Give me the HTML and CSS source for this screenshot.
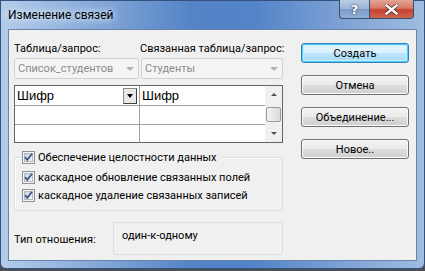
FILE: index.html
```html
<!DOCTYPE html>
<html lang="ru">
<head>
  <meta charset="UTF-8" />
  <title>Изменение связей</title>
  <link rel="stylesheet" href="styles.css">
</head>
<body>
  <div class="window">
    <div class="titlebar">
      <span class="title">Изменение связей</span>
      <div class="caption-buttons">
        <span class="cap-btn help">?</span>
        <span class="cap-btn close">
          <svg width="13" height="11" viewBox="0 0 13 11">
            <path d="M1.5 1.5 L11.5 9.5 M11.5 1.5 L1.5 9.5" stroke="#5a2a24" stroke-width="4" stroke-linecap="square" fill="none"/>
            <path d="M1.5 1.5 L11.5 9.5 M11.5 1.5 L1.5 9.5" stroke="#ffffff" stroke-width="2.4" stroke-linecap="square" fill="none"/>
          </svg>
        </span>
      </div>
    </div>

    <div class="client">
      <div class="main">
        <div class="pick-row">
          <div class="pick pick-left">
            <label>Таблица/запрос:</label>
            <div class="combo"><span>Список_студентов</span><i class="combo-arrow"></i></div>
          </div>
          <div class="pick pick-right">
            <label>Связанная таблица/запрос:</label>
            <div class="combo"><span>Студенты</span><i class="combo-arrow"></i></div>
          </div>
        </div>

        <div class="grid">
          <div class="cols">
            <div class="row row-1">
              <div class="cell cell-left">Шифр<span class="cell-drop"><i></i></span></div>
              <div class="cell">Шифр</div>
            </div>
            <div class="row row-2">
              <div class="cell cell-left"></div>
              <div class="cell"></div>
            </div>
            <div class="row row-3">
              <div class="cell cell-left"></div>
              <div class="cell"></div>
            </div>
          </div>
          <div class="scrollbar">
            <span class="sb-btn"><i class="up"></i></span>
            <span class="sb-track"><span class="sb-thumb"></span></span>
            <span class="sb-btn"><i class="down"></i></span>
          </div>
        </div>

        <div class="group">
          <div class="check legend">
            <svg class="box" width="13" height="13" viewBox="0 0 13 13"><use href="#cb"/></svg>
            <span>Обеспечение целостности данных</span>
          </div>
          <div class="check">
            <svg class="box" width="13" height="13" viewBox="0 0 13 13"><use href="#cb"/></svg>
            <span>каскадное обновление связанных полей</span>
          </div>
          <div class="check">
            <svg class="box" width="13" height="13" viewBox="0 0 13 13"><use href="#cb"/></svg>
            <span>каскадное удаление связанных записей</span>
          </div>
        </div>

        <div class="relation">
          <span class="relation-label">Тип отношения:</span>
          <div class="relation-box">один-к-одному</div>
        </div>
      </div>

      <div class="side">
        <button class="btn default">Создать</button>
        <button class="btn">Отмена</button>
        <button class="btn">Объединение...</button>
        <button class="btn">Новое..</button>
      </div>
    </div>
  </div>

  <svg width="0" height="0" style="position:absolute">
    <defs>
      <linearGradient id="cbfill" x1="0" y1="0" x2="1" y2="1">
        <stop offset="0" stop-color="#cbd2da"/>
        <stop offset="1" stop-color="#f7f7f7"/>
      </linearGradient>
      <symbol id="cb" viewBox="0 0 13 13">
        <rect x="0.5" y="0.5" width="12" height="12" fill="#f4f4f4" stroke="#8e8f8f"/>
        <rect x="2.5" y="2.5" width="8" height="8" fill="url(#cbfill)" stroke="#b3b9c1"/>
        <path d="M3 6.2 L5.3 8.8 L10 2.8" stroke="#3d5591" stroke-width="1.8" fill="none"/>
      </symbol>
    </defs>
  </svg>
</body>
</html>
```

FILE: styles.css
```css
body {
  margin: 0;
  background-color: #4b4f55;
  font-family: Roboto, "Liberation Sans", sans-serif;
  font-size: 11px;
  color: #000;
}

.window {
  width: 425px;
  height: 269px;
  box-sizing: border-box;
  border: 1px solid #34527d;
  border-radius: 0 0 6px 6px;
  background: linear-gradient(to right, #b3cceb 0%, #8fb0dc 18%, #5483c6 45%, #5384c8 60%, #86a8d7 85%, #9fbde2 100%);
  display: flex;
  flex-direction: column;
}

.titlebar {
  height: 28px;
  display: flex;
  align-items: flex-start;
  padding-left: 7px;
}

.title {
  margin-top: 6px;
  font-size: 12px;
  line-height: 16px;
  text-shadow: 0 0 6px #e6f0fb, 0 0 10px #d8e6f7;
}

.caption-buttons {
  margin-left: auto;
  margin-right: 10px;
  margin-top: -1px;
  display: flex;
}

.cap-btn {
  height: 19px;
  display: flex;
  align-items: center;
  justify-content: center;
  border: 1px solid #3a4f6e;
  border-top: none;
  box-sizing: border-box;
}

.help {
  width: 30px;
  border-radius: 0 0 0 4px;
  border-right: none;
  background: linear-gradient(#b9cde6 0%, #9bb5d8 48%, #7d9bc7 52%, #8fb0da 100%);
  color: #fff;
  font-family: "DejaVu Sans", sans-serif;
  font-weight: bold;
  font-size: 13px;
  text-shadow: 0 0 2px #2c3e5c, 0 0 1px #2c3e5c;
}

.close {
  width: 45px;
  border-radius: 0 0 4px 0;
  background: linear-gradient(#e4a596 0%, #d8786a 45%, #c3412f 55%, #d0664e 100%);
}

.client {
  flex: 1;
  margin: 0 7px 7px 7px;
  border: 1px solid #6a84a9;
  background-color: #f0f0f0;
  display: flex;
}

.main {
  width: 269px;
  padding-left: 5px;
}

/* table pickers */
.pick-row {
  display: flex;
  gap: 2px;
  margin-top: 11px;
}

.pick-left { width: 125px; }
.pick-right { width: 142px; }

.pick label {
  display: block;
  height: 16px;
  line-height: 16px;
  white-space: nowrap;
  margin-bottom: 1px;
}

.pick-right label { margin-left: -1px; }

.combo {
  height: 21px;
  box-sizing: border-box;
  border: 1px solid #d2d2d2;
  border-radius: 2px;
  background-color: #f4f4f4;
  color: #8c8c8c;
  display: flex;
  align-items: center;
  padding-left: 3px;
  white-space: nowrap;
}

.combo-arrow {
  margin-left: auto;
  margin-right: 4px;
  width: 0;
  height: 0;
  border-left: 4px solid transparent;
  border-right: 4px solid transparent;
  border-top: 4px solid #b0b0b0;
}

/* field grid */
.grid {
  margin-top: 6px;
  height: 58px;
  box-sizing: border-box;
  border: 1px solid #646464;
  background-color: #fff;
  display: flex;
}

.cols { width: 250px; }

.row {
  display: flex;
  box-sizing: border-box;
  border-bottom: 1px solid #a0a0a0;
}

.row-1 { height: 20px; }
.row-2 { height: 19px; }
.row-3 { height: 17px; border-bottom: none; }

.cell {
  width: 125px;
  font-family: "Liberation Sans", Arial, sans-serif;
  font-size: 13px;
  line-height: 18px;
  padding-left: 2px;
  box-sizing: border-box;
  display: flex;
  align-items: center;
}

.cell-left {
  width: 125px;
  border-right: 1px solid #a0a0a0;
}

.cell-drop {
  margin-left: auto;
  margin-right: 2px;
  width: 14px;
  height: 16px;
  box-sizing: border-box;
  border: 1px solid;
  border-color: #8a8a8a #404040 #404040 #8a8a8a;
  background-color: #e8e8e8;
  display: flex;
  align-items: center;
  justify-content: center;
}

.cell-drop i {
  width: 0;
  height: 0;
  border-left: 3px solid transparent;
  border-right: 3px solid transparent;
  border-top: 4px solid #000;
}

.scrollbar {
  width: 17px;
  display: flex;
  flex-direction: column;
  background-color: #f0f0f0;
}

.sb-btn {
  height: 17px;
  display: flex;
  align-items: center;
  justify-content: center;
}

.sb-btn i {
  width: 0;
  height: 0;
  border-left: 3px solid transparent;
  border-right: 3px solid transparent;
}

.sb-btn .up { border-bottom: 3px solid #505050; }
.sb-btn .down { border-top: 3px solid #505050; }

.sb-track {
  flex: 1;
  display: flex;
  align-items: center;
}

.sb-thumb {
  width: 15px;
  height: 15px;
  margin-left: 1px;
  box-sizing: border-box;
  border: 1px solid #9a9a9a;
  border-radius: 2px;
  background: linear-gradient(to right, #f2f2f2, #dcdcdc);
}

/* referential integrity group */
.group {
  margin-top: 14px;
  height: 54px;
  box-sizing: border-box;
  border: 1px solid #d5dfe5;
  border-radius: 3px;
  box-shadow: inset 1px 1px 0 #fff;
  padding-left: 7px;
}

.check {
  display: flex;
  align-items: center;
  gap: 3px;
  height: 18px;
  white-space: nowrap;
}

.check .box { flex: none; }

.legend {
  margin-top: -10px;
  margin-bottom: 2px;
  width: max-content;
  background-color: #f0f0f0;
  padding-right: 4px;
}

/* relation type */
.relation {
  margin-top: 11px;
  display: flex;
  align-items: center;
}

.relation-label {
  width: 99px;
  margin-top: 2px;
}

.relation-box {
  width: 170px;
  height: 33px;
  box-sizing: border-box;
  border: 1px solid #d5dfe5;
  border-radius: 3px;
  padding: 6px 0 0 8px;
}

/* command buttons */
.side {
  margin-left: 18px;
  padding-top: 13px;
  display: flex;
  flex-direction: column;
  gap: 12px;
}

.btn {
  width: 108px;
  height: 20px;
  font-family: Roboto, "Liberation Sans", sans-serif;
  font-size: 11px;
  color: #000;
  padding: 0;
  border: 1px solid #707070;
  border-radius: 3px;
  background: linear-gradient(#f2f2f2 0%, #ebebeb 48%, #dddddd 52%, #cfcfcf 100%);
  box-shadow: inset 0 0 0 1px #fbfbfb;
}

.btn.default {
  border-color: #3c7fb1;
  box-shadow: inset 0 0 0 1px #48d0fc, inset 0 0 0 2px #c6ecfd;
  background: linear-gradient(#eaf6fd 0%, #d9f0fc 48%, #bee6fd 52%, #a7d9f5 100%);
}
```
